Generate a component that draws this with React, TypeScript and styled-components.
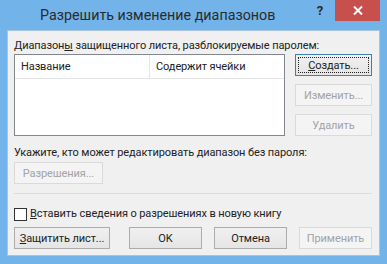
import styled, { createGlobalStyle } from 'styled-components';

const GlobalStyle = createGlobalStyle`
  html, body {
    margin: 0;
    padding: 0;
    background: #72b4ea;
  }
  * {
    box-sizing: border-box;
  }
`;

const App = () => {
  return (
    <>
      <GlobalStyle />
      <Window>
        <TitleBar>
          <Title>Разрешить изменение диапазонов</Title>
          <HelpButton>?</HelpButton>
          <CloseButton>
            <svg width='10' height='9' viewBox='0 0 10 9'>
              <path d='M1 0.5 L9 8.5 M9 0.5 L1 8.5' stroke='#fff' strokeWidth='2' />
            </svg>
          </CloseButton>
        </TitleBar>
        <Panel>
          <Label $top={7}>
            Диапазон<u>ы</u> защищенного листа, разблокируемые паролем:
          </Label>
          <RangeSection>
            <ListBox>
              <ListHeader>
                <HeaderCell $width={135}>Название</HeaderCell>
                <HeaderCell>Содержит ячейки</HeaderCell>
              </ListHeader>
            </ListBox>
            <SideButtons>
              <Button $isDefault $width={77}>
                <FocusRect>
                  <u>С</u>оздать...
                </FocusRect>
              </Button>
              <Button disabled $width={77}>
                Изменить...
              </Button>
              <Button disabled $width={77}>
                Удалить
              </Button>
            </SideButtons>
          </RangeSection>
          <Label $top={9}>
            Укажите, кто может редактировать диапазон без пароля:
          </Label>
          <Button disabled $width={89} $top={1}>
            Разрешения...
          </Button>
          <Separator />
          <CheckRow>
            <CheckBox />
            <span>
              <u>В</u>ставить сведения о разрешениях в новую книгу
            </span>
          </CheckRow>
          <BottomBar>
            <Button $width={96}>
              <u>З</u>ащитить лист...
            </Button>
            <ButtonGroup>
              <Button $width={73}>OK</Button>
              <Button $width={73}>Отмена</Button>
              <Button disabled $width={73}>
                Применить
              </Button>
            </ButtonGroup>
          </BottomBar>
        </Panel>
      </Window>
    </>
  );
};

export default App;

const Window = styled.div`
  width: 387px;
  height: 264px;
  background: #72b4ea;
  display: flex;
  flex-direction: column;
  padding: 0 7px 8px 7px;
  font-family: Roboto, 'Noto Sans', sans-serif;
`;

const TitleBar = styled.div`
  height: 30px;
  flex-shrink: 0;
  display: flex;
  align-items: flex-start;
  margin: 0 -7px;
`;

const Title = styled.div`
  flex: 1;
  padding-left: 40px;
  padding-top: 5px;
  font-size: 14.3px;
  line-height: 20px;
  color: #2b2b2b;
  white-space: nowrap;
`;

const HelpButton = styled.div`
  width: 26px;
  height: 21px;
  margin-right: 2px;
  font-size: 13px;
  font-weight: bold;
  line-height: 21px;
  color: #2a2a2a;
  text-align: center;
`;

const CloseButton = styled.div`
  width: 45px;
  height: 21px;
  margin-right: 7px;
  background: #c7504c;
  display: flex;
  align-items: center;
  justify-content: center;
`;

const Panel = styled.div`
  flex: 1;
  background: #f0f0f0;
  border: 1px solid #a7c4dc;
  padding: 0 6px;
  display: flex;
  flex-direction: column;
  align-items: flex-start;
  font-size: 11px;
  letter-spacing: -0.1px;
  color: #222;
`;

const Label = styled.div<{ $top: number }>`
  margin-top: ${({ $top }) => $top}px;
  line-height: 16px;
  white-space: nowrap;
`;

const RangeSection = styled.div`
  display: flex;
  gap: 10px;
  width: 100%;
`;

const ListBox = styled.div`
  width: 271px;
  height: 82px;
  background: #fff;
  border: 1px solid #828790;
`;

const ListHeader = styled.div`
  height: 24px;
  display: flex;
  border-bottom: 1px solid #e5e5e5;
`;

const HeaderCell = styled.div<{ $width?: number }>`
  width: ${({ $width }) => ($width ? `${$width}px` : 'auto')};
  flex: ${({ $width }) => ($width ? 'none' : '1')};
  padding-left: 6px;
  line-height: 23px;
  border-right: ${({ $width }) => ($width ? '1px solid #e5e5e5' : 'none')};
`;

const SideButtons = styled.div`
  display: flex;
  flex-direction: column;
  gap: 8px;
`;

const Button = styled.button<{ $width: number; $top?: number; $isDefault?: boolean }>`
  width: ${({ $width }) => $width}px;
  height: 22px;
  margin-top: ${({ $top }) => $top ?? 0}px;
  padding: 0;
  font-family: inherit;
  font-size: 11px;
  letter-spacing: -0.1px;
  color: #222;
  background: linear-gradient(#f0f0f0, #e5e5e5);
  border: 1px solid ${({ $isDefault }) => ($isDefault ? '#3c7fb1' : '#acacac')};
  border-radius: 0;
  display: flex;
  align-items: center;
  justify-content: center;
  white-space: nowrap;

  &:disabled {
    color: #a3a3a3;
    background: #f4f4f4;
    border-color: #dadada;
  }
`;

const FocusRect = styled.span`
  flex: 1;
  align-self: stretch;
  margin: 2px;
  border: 1px dotted #222;
  display: flex;
  align-items: center;
  justify-content: center;
`;

const Separator = styled.div`
  width: 358px;
  height: 1px;
  margin-top: 9px;
  background: #dcdcdc;
`;

const CheckRow = styled.div`
  margin-top: 12px;
  display: flex;
  align-items: center;
  gap: 3px;
  line-height: 16px;
  white-space: nowrap;
`;

const CheckBox = styled.span`
  width: 13px;
  height: 13px;
  background: #fff;
  border: 1px solid #333;
`;

const BottomBar = styled.div`
  margin-top: 5px;
  width: 358px;
  display: flex;
  justify-content: space-between;
`;

const ButtonGroup = styled.div`
  display: flex;
  gap: 12px;
`;
